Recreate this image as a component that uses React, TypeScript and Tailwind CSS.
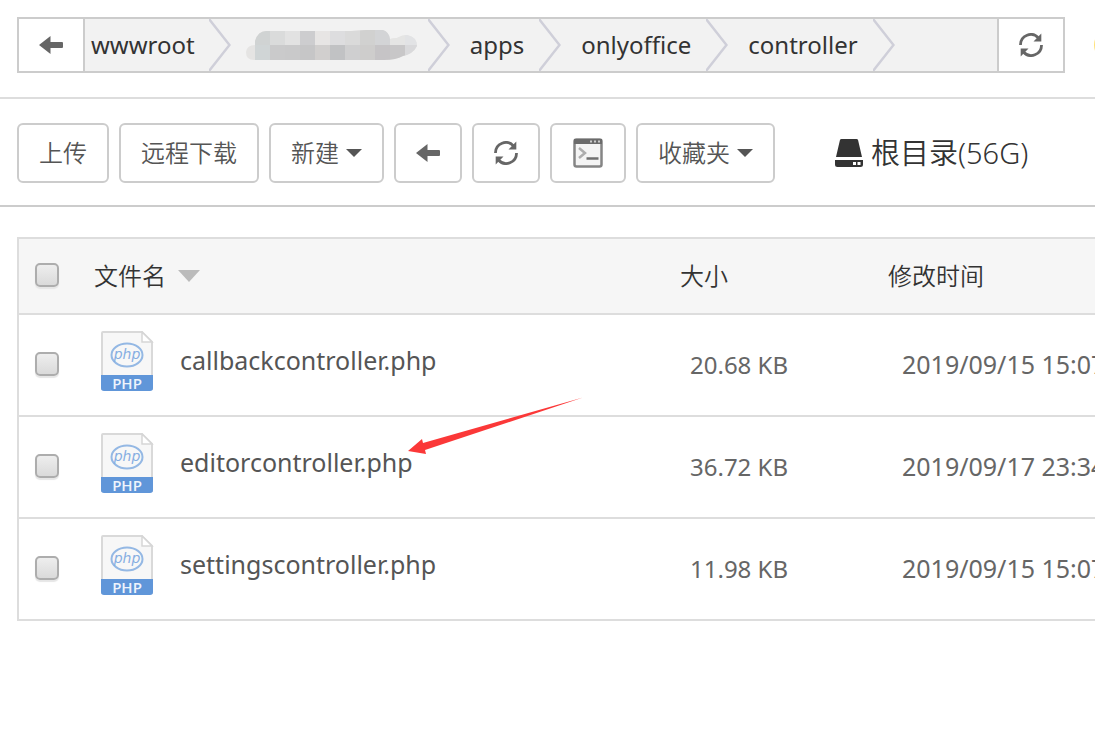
import type { ReactNode } from "react";

const font = "font-['Noto_Sans','Noto_Sans_CJK_SC',sans-serif]";

const files = [
  { name: "callbackcontroller.php", size: "20.68 KB", modified: "2019/09/15 15:07" },
  { name: "editorcontroller.php", size: "36.72 KB", modified: "2019/09/17 23:34" },
  { name: "settingscontroller.php", size: "11.98 KB", modified: "2019/09/15 15:07" },
];

function ArrowLeft() {
  return (
    <svg width="24" height="18" viewBox="0 0 24 18" fill="#666" aria-hidden="true">
      <path d="M0 9L11.500 0V6H23Q24 6 24 7V11Q24 12 23 12H11.500V18Z" />
    </svg>
  );
}

function Refresh() {
  return (
    <svg width="24" height="24" viewBox="0 0 24 24" fill="none" stroke="#666" strokeWidth="2.800" aria-hidden="true">
      <path d="M1.500 12A10.300 10.300 0 0 1 19.500 5" />
      <path d="M22.500 12A10.300 10.300 0 0 1 4.500 19" />
      <path d="M22.300 0.500V8.500H14.500Z" fill="#666" stroke="none" />
      <path d="M1.700 23.500V15.500H9.500Z" fill="#666" stroke="none" />
    </svg>
  );
}

function Terminal() {
  return (
    <svg width="30" height="30" viewBox="0 0 30 30" fill="none" aria-hidden="true">
      <rect x="1.500" y="1.500" width="27" height="27" rx="2" fill="#f4f4f4" stroke="#858585" strokeWidth="2.500" />
      <path d="M1 1h28v5H1z" fill="#6b6b6b" />
      <path d="M17 3.500h2m2 0h2m2 0h2" stroke="#ccc" strokeWidth="2" />
      <path d="M6 10l6 5-6 5" stroke="#adadad" strokeWidth="2.500" />
      <path d="M13.500 20.500h12" stroke="#707070" strokeWidth="2.500" />
    </svg>
  );
}

function Caret() {
  return (
    <svg width="16" height="8" viewBox="0 0 16 8" fill="#555" aria-hidden="true">
      <path d="M0 0h16L8 8z" />
    </svg>
  );
}

function Drive() {
  return (
    <svg width="28" height="28" viewBox="0 0 28 28" fill="#333" aria-hidden="true">
      <path d="M6.500 0h15q1.300 0 1.600 1.300L27 18H1L4.900 1.300Q5.200 0 6.500 0z" />
      <path fillRule="evenodd" d="M0 21h28v4.500q0 2.500-2.500 2.500h-23Q0 28 0 25.500zM18 23v3h3v-3zM22.500 23v3h3v-3z" />
    </svg>
  );
}

function Chevron() {
  return (
    <svg className="shrink-0" width="22" height="52" viewBox="0 0 22 52" fill="none" stroke="#cfcfd9" strokeWidth="2.500" aria-hidden="true">
      <path d="M0 0L20.500 26L0 52" />
    </svg>
  );
}

function PhpFile() {
  return (
    <svg className="shrink-0" width="54" height="60" viewBox="0 0 54 60" aria-hidden="true">
      <path d="M3 1H42L52 11V58H2V2Q2 1 3 1Z" fill="#f7f7f7" stroke="#d9d9d9" strokeWidth="2" />
      <path d="M42 1V11H52Z" fill="#fff" stroke="#d6d6d6" strokeWidth="1.500" />
      <path d="M1 44H53V57Q53 60 50 60H4Q1 60 1 57Z" fill="#6096d9" />
      <ellipse cx="27" cy="24" rx="15.500" ry="11.500" fill="none" stroke="#94b8e4" strokeWidth="2" />
      <text x="27" y="28" textAnchor="middle" fontSize="14" fontStyle="italic" fill="#86aee2" fontFamily="DejaVu Sans, sans-serif">php</text>
      <text x="27" y="58" textAnchor="middle" fontSize="15" fontWeight="600" fill="#eef4fc" fontFamily="Open Sans, sans-serif">PHP</text>
    </svg>
  );
}

const mosaic = [
  ["#d0d3d3", "#dadbdb", "#e2e2e2", "#cdcdcf", "#e7e5e4", "#dddddf", "#dadada", "#d1d1d0", "#d3d4d6", "#e5e5e4", "#e2e3e5"],
  ["#d0d5d6", "#cacacb", "#c9c9ca", "#c6c6c7", "#d1cfce", "#c1c2c4", "#cfcfd0", "#cecdcc", "#c6c4c6", "#c8c7c8", "#d9d9db"],
];

function HiddenSegment() {
  return (
    <svg className="shrink-0" width="172" height="32" viewBox="0 0 172 32" role="img" aria-label="Hidden folder">
      <clipPath id="blob">
        <path d="M9 16V12Q12 2 20 2H105L120 1H137Q143 3 144 10Q148 9 151 9Q156 6 161 6Q171 8 171 17Q167 25 157 27Q150 31 138 31H8Q0 31 0 23Q1 16 9 16Z" />
      </clipPath>
      <g clipPath="url(#blob)">
        <path d="M0 0h172v32H0z" fill="#e5e4e3" />
        {mosaic.map((row, y) => row.map((fill, x) => (
          <rect key={`${x}-${y}`} x={9 + x * 15} y={y * 16} width="15" height="16" fill={fill} />
        )))}
      </g>
    </svg>
  );
}

function ToolButton({ label, className, children }: { label?: string; className: string; children: ReactNode }) {
  return (
    <button type="button" aria-label={label} className={`flex h-15 shrink-0 items-center justify-center gap-[7px] rounded-md border-2 border-[#ccc] bg-white text-2xl font-[350] text-[#555] ${className}`}>
      {children}
    </button>
  );
}

function Check({ label }: { label: string }) {
  return (
    <input
      type="checkbox"
      aria-label={label}
      className="-mt-0.5 block size-6 appearance-none rounded-[5px] border-2 border-[#adadad] bg-linear-to-b from-[#eee] to-[#dadada] shadow-[0_2px_1px_#e6e6e6] checked:bg-[#6096d9]"
    />
  );
}

export default function App() {
  return (
    <div className={`min-h-screen overflow-hidden bg-white text-[#333] ${font}`}>
      <header className="flex items-center overflow-hidden border-b-2 border-[#ddd] pt-[17px] pb-6 pl-[17px]">
        <nav aria-label="Path" className="flex h-14 min-w-0 flex-1 items-center border-2 border-[#ccc] bg-[#f2f2f2] text-2xl">
          <button type="button" aria-label="Back" className="flex h-full w-16.5 shrink-0 items-center justify-center border-r-2 border-[#ccc] bg-white">
            <ArrowLeft />
          </button>
          <a href="#wwwroot" className="pr-3.5 pl-1.5">wwwroot</a>
          <Chevron />
          <a href="#hidden" className="pr-2.5 pl-[15px]"><HiddenSegment /></a>
          <Chevron />
          <a href="#apps" className="pr-[15px] pl-5">apps</a>
          <Chevron />
          <a href="#onlyoffice" className="pr-[15px] pl-5">onlyoffice</a>
          <Chevron />
          <a href="#controller" className="pr-[15px] pl-5">controller</a>
          <Chevron />
          <button type="button" aria-label="Refresh path" className="ml-auto flex h-full w-16.5 shrink-0 items-center justify-center border-l-2 border-[#ccc] bg-white">
            <Refresh />
          </button>
        </nav>
        <div className="w-7.5 shrink-0 pl-[29px]">
          <svg width="32" height="32" viewBox="0 0 32 32" fill="#ffe27a" aria-hidden="true" className="max-w-none">
            <circle cx="16" cy="16" r="16" />
          </svg>
        </div>
      </header>

      <div className="flex items-center gap-2.5 border-b-2 border-[#ccc] pt-6 pb-[22px] pl-[17px]">
        <ToolButton className="px-5">上传</ToolButton>
        <ToolButton className="px-5">远程下载</ToolButton>
        <ToolButton className="px-5">新建<Caret /></ToolButton>
        <ToolButton label="Back" className="w-17"><ArrowLeft /></ToolButton>
        <ToolButton label="Refresh" className="w-17"><Refresh /></ToolButton>
        <ToolButton label="Terminal" className="w-19"><Terminal /></ToolButton>
        <ToolButton className="px-5">收藏夹<Caret /></ToolButton>
        <a href="#root" className="ml-[50px] flex items-center gap-2 text-[29px] font-[350] whitespace-nowrap"><Drive />根目录(56G)</a>
      </div>

      <main className="overflow-hidden pt-7.5 pl-[17px]">
        <table className="w-full min-w-[1160px] table-fixed border-collapse border-2 border-[#ddd] text-left whitespace-nowrap">
          <colgroup>
            <col className="w-19" />
            <col className="w-[586px]" />
            <col className="w-52" />
            <col />
          </colgroup>
          <thead>
            <tr className="h-19 border-b-2 border-[#ddd] bg-[#f6f6f6] text-2xl">
              <th className="pl-4 font-[350]"><Check label="Select all" /></th>
              <th className="font-[350]">
                <button type="button" className="flex items-center gap-3">
                  文件名
                  <svg width="22" height="12" viewBox="0 0 22 12" fill="#bbb" aria-hidden="true"><path d="M0 0h22L11 12z" /></svg>
                </button>
              </th>
              <th className="font-[350]">大小</th>
              <th className="font-[350]">修改时间</th>
            </tr>
          </thead>
          <tbody>
            {files.map((file) => (
              <tr key={file.name} className="h-25.5 border-b-2 border-[#ddd] text-[25px] text-[#666]">
                <td className="pl-4"><Check label={`Select ${file.name}`} /></td>
                <td className="pb-2 pl-1.5">
                  <a href={`#${file.name}`} className="flex items-center gap-6.5 text-[#555]"><PhpFile />{file.name}</a>
                </td>
                <td className="pl-2.5 text-2xl">{file.size}</td>
                <td className="pl-3.5">{file.modified}</td>
              </tr>
            ))}
          </tbody>
        </table>
      </main>

      <svg className="pointer-events-none absolute top-[396px] left-[406px]" width="180" height="62" viewBox="0 0 180 62" fill="#fb3838" aria-hidden="true">
        <path d="M2 55L16 43L17 47L177 1.500L19 54L20 58Z" />
      </svg>
    </div>
  );
}
